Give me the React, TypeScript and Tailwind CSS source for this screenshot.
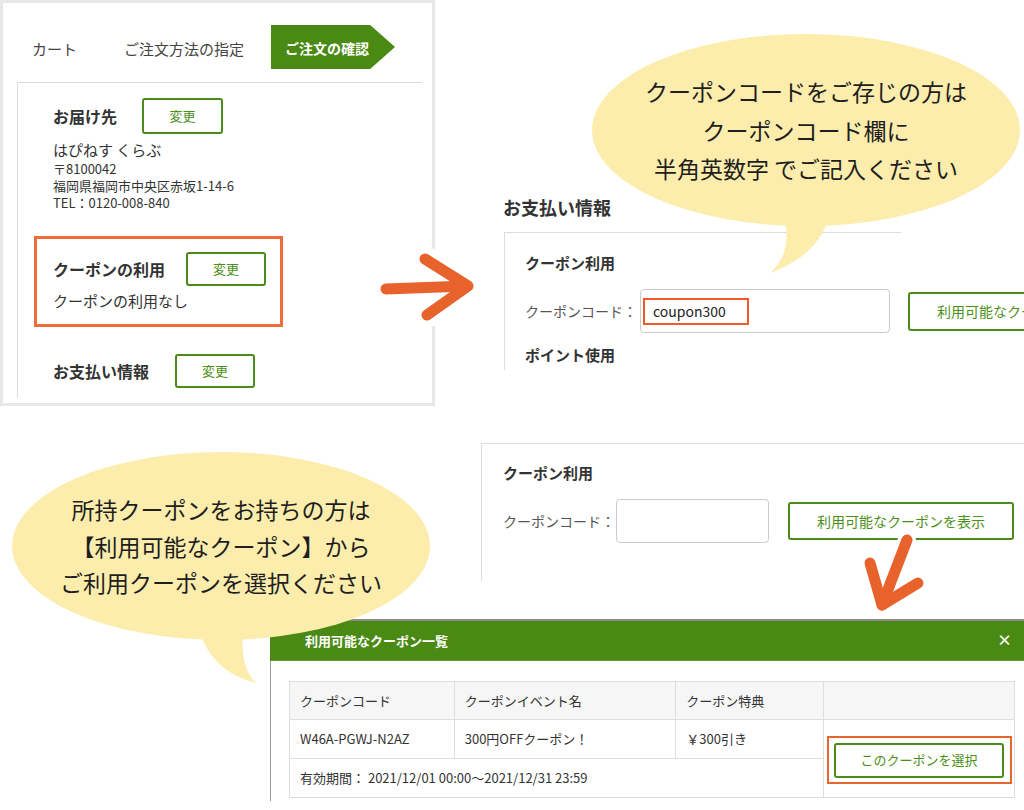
const btn =
  "flex shrink-0 items-center justify-center rounded-[3px] border-2 border-[#4b8b1b] bg-white text-[13px] text-[#4a8f16]";

function Arrow({ className, w, h, shaft, head, halo }: { className: string; w: number; h: number; shaft: string; head: string; halo: number }) {
  return (
    <svg className={className} width={w} height={h} viewBox={`0 0 ${w} ${h}`}>
      <g fill="none" stroke="#ffffff" strokeWidth={halo} strokeLinecap="round" strokeLinejoin="round">
        <path d={shaft} />
        <path d={head} />
      </g>
      <g fill="none" stroke="#e8622c" strokeWidth={11} strokeLinecap="round" strokeLinejoin="round">
        <path d={shaft} />
        <path d={head} />
      </g>
    </svg>
  );
}

export default function App() {
  return (
    <div className="relative h-[810px] w-[1024px] overflow-hidden bg-white font-['Noto_Sans_CJK_JP','Noto_Sans',sans-serif] text-[#333]">
      {/* order confirmation panel */}
      <div className="absolute left-0 top-0 h-[406px] w-[435px] border-[3px] border-[#e8e8e8] bg-white">
        <div className="flex items-center pl-[29px] pt-[22px] text-[15px] text-[#444]">
          <span className="w-[92px] pt-[3px] leading-[41px]">カート</span>
          <span className="w-[147px] pt-[3px] leading-[41px]">ご注文方法の指定</span>
          <div className="flex h-[44px] w-[124px] items-center bg-[#4a8a14] pl-[14px] pt-[2px] text-[14px] font-bold text-white [clip-path:polygon(0_0,80%_0,100%_50%,80%_100%,0_100%)]">
            ご注文の確認
          </div>
        </div>
        <div className="ml-[14px] mt-[13px] h-[316px] w-[405px] overflow-hidden border-l border-t border-[#dddddd]">
          <div className="pl-[35px] pt-[15px]">
            <div className="flex items-center">
              <span className="w-[89px] text-[16px] font-bold leading-[20px]">お届け先</span>
              <div className={`${btn} h-[36px] w-[81px]`}>変更</div>
            </div>
            <div className="mt-[6px] text-[15px] leading-[20px]">はぴねす くらぶ</div>
            <div className="text-[13px] leading-[17px]">〒8100042</div>
            <div className="text-[13px] leading-[17px]">福岡県福岡市中央区赤坂1-14-6</div>
            <div className="text-[13px] leading-[17px]">TEL：0120-008-840</div>
          </div>
          <div className="ml-[16px] mt-[25px] h-[91px] w-[249px] border-[3px] border-[#f26b3a] pl-[16px] pt-[13px]">
            <div className="flex items-center">
              <span className="w-[133px] text-[16px] font-bold leading-[20px]">クーポンの利用</span>
              <div className={`${btn} h-[34px] w-[80px]`}>変更</div>
            </div>
            <div className="mt-[5px] text-[15px] leading-[20px]">クーポンの利用なし</div>
          </div>
          <div className="mt-[27px] flex items-center pl-[35px]">
            <span className="w-[122px] text-[16px] font-bold leading-[20px]">お支払い情報</span>
            <div className={`${btn} h-[34px] w-[80px]`}>変更</div>
          </div>
        </div>
      </div>

      {/* payment info with coupon code typed */}
      <div className="absolute left-[503px] top-[195px] w-[521px]">
        <div className="text-[18px] font-bold leading-[24px]">お支払い情報</div>
        <div className="ml-[1px] mt-[13px] h-[138px] overflow-hidden border-l border-[#dddddd]">
          <div className="h-px w-[396px] bg-[#dddddd]" />
          <div className="pl-[20px] pt-[20px]">
            <div className="text-[15px] font-bold leading-[20px]">クーポン利用</div>
            <div className="mt-[16px] flex items-center">
              <span className="w-[115px] shrink-0 text-[14px] text-[#555]">クーポンコード：</span>
              <div className="flex h-[44px] w-[250px] shrink-0 items-center rounded-[4px] border border-[#cccccc] pl-[2px]">
                <div className="flex h-[27px] w-[106px] items-center border-2 border-[#ef5a2a] pl-[8px] text-[14px] text-[#222]">
                  coupon300
                </div>
              </div>
              <div className={`${btn} ml-[18px] h-[39px] w-[226px] text-[14px]`}>利用可能なクーポンを表示</div>
            </div>
            <div className="mt-[12px] text-[15px] font-bold leading-[20px]">ポイント使用</div>
          </div>
        </div>
      </div>

      {/* coupon entry, empty */}
      <div className="absolute left-[481px] top-[443px] h-[138px] w-[543px] border-l border-t border-[#dddddd] pl-[21px] pt-[19px]">
        <div className="text-[15px] font-bold leading-[20px]">クーポン利用</div>
        <div className="mt-[16px] flex items-center">
          <span className="w-[113px] shrink-0 text-[14px] text-[#555]">クーポンコード：</span>
          <div className="h-[44px] w-[153px] shrink-0 rounded-[4px] border border-[#cccccc]" />
          <div className={`${btn} ml-[19px] h-[38px] w-[226px] text-[14px]`}>利用可能なクーポンを表示</div>
        </div>
      </div>

      {/* available coupons modal */}
      <div className="absolute left-[270px] top-[619px] flex h-[182px] w-[754px] flex-col border-t-2 border-[#8a8a8a] bg-white">
        <div className="flex h-[40px] shrink-0 items-center justify-between border-b border-[#5c9c26] bg-[#4a8a14] pl-[35px] pr-[12px] text-white">
          <span className="text-[13px] font-bold">利用可能なクーポン一覧</span>
          <span className="text-[15px] font-bold">×</span>
        </div>
        <div className="flex-1 border-l border-[#9a9a9a] pl-[18px] pt-[20px]">
          <table className="w-[726px] border-collapse text-[13px] text-[#333]">
            <tbody>
              <tr className="h-[38px] bg-[#f6f6f6]">
                <td className="w-[165px] border border-[#dddddd] px-[10px]">クーポンコード</td>
                <td className="w-[222px] border border-[#dddddd] px-[10px]">クーポンイベント名</td>
                <td className="w-[148px] border border-[#dddddd] px-[10px]">クーポン特典</td>
                <td className="w-[191px] border border-[#dddddd]" />
              </tr>
              <tr className="h-[39px]">
                <td className="border border-[#dddddd] px-[10px]">W46A-PGWJ-N2AZ</td>
                <td className="border border-[#dddddd] px-[10px]">300円OFFクーポン！</td>
                <td className="border border-[#dddddd] px-[10px]">￥300引き</td>
                <td rowSpan={2} className="border border-[#dddddd] bg-white">
                  <div className="mx-auto mt-[3px] flex h-[48px] w-[185px] items-center justify-center border-2 border-[#e8662e]">
                    <div className={`${btn} h-[35px] w-[170px]`}>このクーポンを選択</div>
                  </div>
                </td>
              </tr>
              <tr className="h-[39px]">
                <td colSpan={3} className="border border-[#dddddd] px-[10px]">
                  有効期間： 2021/12/01 00:00～2021/12/31 23:59
                </td>
              </tr>
            </tbody>
          </table>
        </div>
      </div>

      {/* speech bubble: coupon code */}
      <div className="absolute left-[592px] top-[34px] h-[192px] w-[428px]">
        <svg className="absolute inset-0 overflow-visible" width="428" height="192" viewBox="0 0 428 192">
          <ellipse cx="214" cy="96" rx="214" ry="96" fill="#fdedad" />
          <path d="M193 186 C198 214 190 228 178 239 C208 228 228 211 236 186 Z" fill="#fdedad" />
        </svg>
        <div className="relative flex h-full flex-col items-center justify-center text-[23px] leading-[38.5px] text-[#1e1e1e]">
          <span>クーポンコードをご存じの方は</span>
          <span>クーポンコード欄に</span>
          <span>半角英数字 でご記入ください</span>
        </div>
      </div>

      {/* speech bubble: owned coupons */}
      <div className="absolute left-[12px] top-[452px] h-[188px] w-[418px]">
        <svg className="absolute inset-0 overflow-visible" width="418" height="188" viewBox="0 0 418 188">
          <ellipse cx="209" cy="94" rx="209" ry="94" fill="#fdedad" />
          <path d="M188 180 Q200 220 244 231 Q228 216 231 180 Z" fill="#fdedad" />
        </svg>
        <div className="relative flex h-full flex-col items-center justify-center text-[23px] leading-[36.5px] text-[#1e1e1e]">
          <span>所持クーポンをお持ちの方は</span>
          <span>【利用可能なクーポン】から</span>
          <span>ご利用クーポンを選択ください</span>
        </div>
      </div>

      <Arrow
        className="absolute left-[370px] top-[240px]"
        w={110}
        h={90}
        shaft="M16 49 L97 46"
        head="M55 19 L98 46 L57 75"
        halo={26}
      />
      <Arrow
        className="absolute left-[850px] top-[525px]"
        w={85}
        h={95}
        shaft="M57 15 L32 80"
        head="M20 38 L32 80 L68 58"
        halo={18}
      />
    </div>
  );
}
